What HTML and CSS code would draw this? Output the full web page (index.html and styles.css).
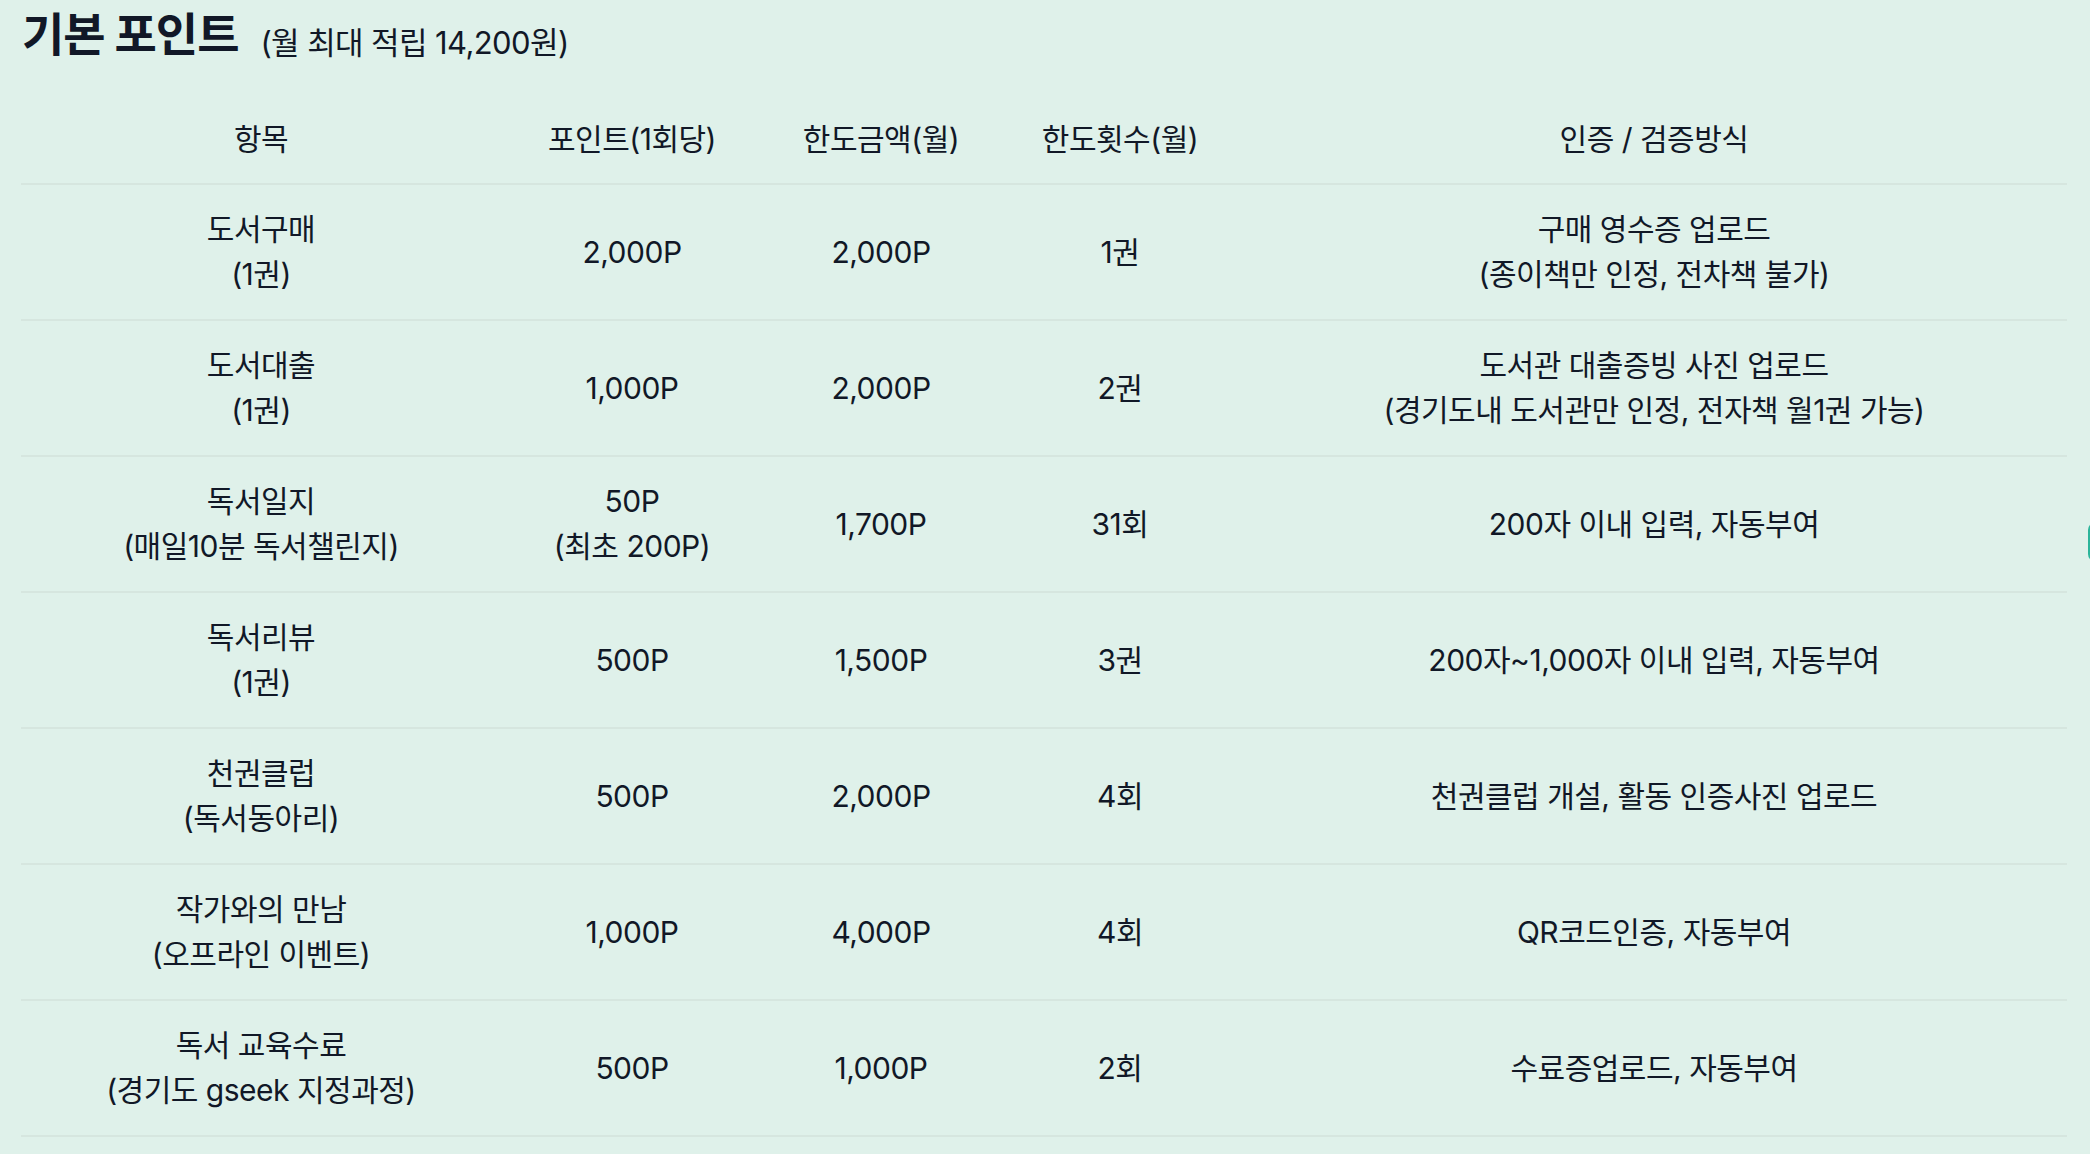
FILE: index.html
```html
<!DOCTYPE html>
<html lang="ko">
<head>
<meta charset="utf-8">
<link rel="stylesheet" href="styles.css">
</head>
<body>
<div class="page">
  <h2 class="title">기본 포인트 <span class="sub">(월 최대 적립 14,200원)</span></h2>
  <table class="points">
    <colgroup>
      <col class="c1"><col class="c2"><col class="c3"><col class="c4"><col class="c5">
    </colgroup>
    <thead>
      <tr><th>항목</th><th>포인트(1회당)</th><th>한도금액(월)</th><th>한도횟수(월)</th><th>인증 / 검증방식</th></tr>
    </thead>
    <tbody>
      <tr><td>도서구매<br>(1권)</td><td>2,000P</td><td>2,000P</td><td>1권</td><td>구매 영수증 업로드<br>(종이책만 인정, 전차책 불가)</td></tr>
      <tr><td>도서대출<br>(1권)</td><td>1,000P</td><td>2,000P</td><td>2권</td><td>도서관 대출증빙 사진 업로드<br>(경기도내 도서관만 인정, 전자책 월1권 가능)</td></tr>
      <tr><td>독서일지<br>(매일10분 독서챌린지)</td><td>50P<br>(최초 200P)</td><td>1,700P</td><td>31회</td><td>200자 이내 입력, 자동부여</td></tr>
      <tr><td>독서리뷰<br>(1권)</td><td>500P</td><td>1,500P</td><td>3권</td><td>200자~1,000자 이내 입력, 자동부여</td></tr>
      <tr><td>천권클럽<br>(독서동아리)</td><td>500P</td><td>2,000P</td><td>4회</td><td>천권클럽 개설, 활동 인증사진 업로드</td></tr>
      <tr><td>작가와의 만남<br>(오프라인 이벤트)</td><td>1,000P</td><td>4,000P</td><td>4회</td><td>QR코드인증, 자동부여</td></tr>
      <tr><td>독서 교육수료<br>(경기도 gseek 지정과정)</td><td>500P</td><td>1,000P</td><td>2회</td><td>수료증업로드, 자동부여</td></tr>
    </tbody>
  </table>
</div>
<div class="edge-tab"></div>
</body>
</html>
```
FILE: styles.css
```css
html, body {
  margin: 0;
  padding: 0;
  background: #dff1ea;
  color: #111827;
  font-family: "Inter", "Noto Sans CJK KR", sans-serif;
}
body {
  min-height: 1154px;
  overflow: hidden;
  position: relative;
}
.page {
  padding: 8px 23px 0 21px;
}
.title {
  margin: 0 0 0 1px;
  font-size: 46px;
  font-weight: 700;
  line-height: 52px;
  height: 52px;
  letter-spacing: -1px;
}
.title .sub {
  font-size: 31px;
  font-weight: 400;
  line-height: 30px;
  margin-left: 12px;
  letter-spacing: -0.6px;
  vertical-align: -3px;
}
.points {
  width: 2046px;
  border-collapse: collapse;
  margin-top: 31px;
  table-layout: fixed;
  font-size: 30px;
  letter-spacing: -0.5px;
}
.c1 { width: 480px; }
.c2 { width: 262px; }
.c3 { width: 236px; }
.c4 { width: 242px; }
.c5 { width: 826px; }
.points th {
  font-weight: 400;
  height: 92px;
  padding: 0;
  text-align: center;
  vertical-align: middle;
  border-bottom: 2px solid #d6e6df;
}
.points td {
  height: 134px;
  padding: 0;
  text-align: center;
  vertical-align: middle;
  line-height: 45px;
  border-bottom: 2px solid #d6e6df;
}
.edge-tab {
  position: absolute;
  right: -14px;
  top: 522px;
  width: 16px;
  height: 40px;
  border-radius: 8px;
  background: #2bb59a;
}
```
